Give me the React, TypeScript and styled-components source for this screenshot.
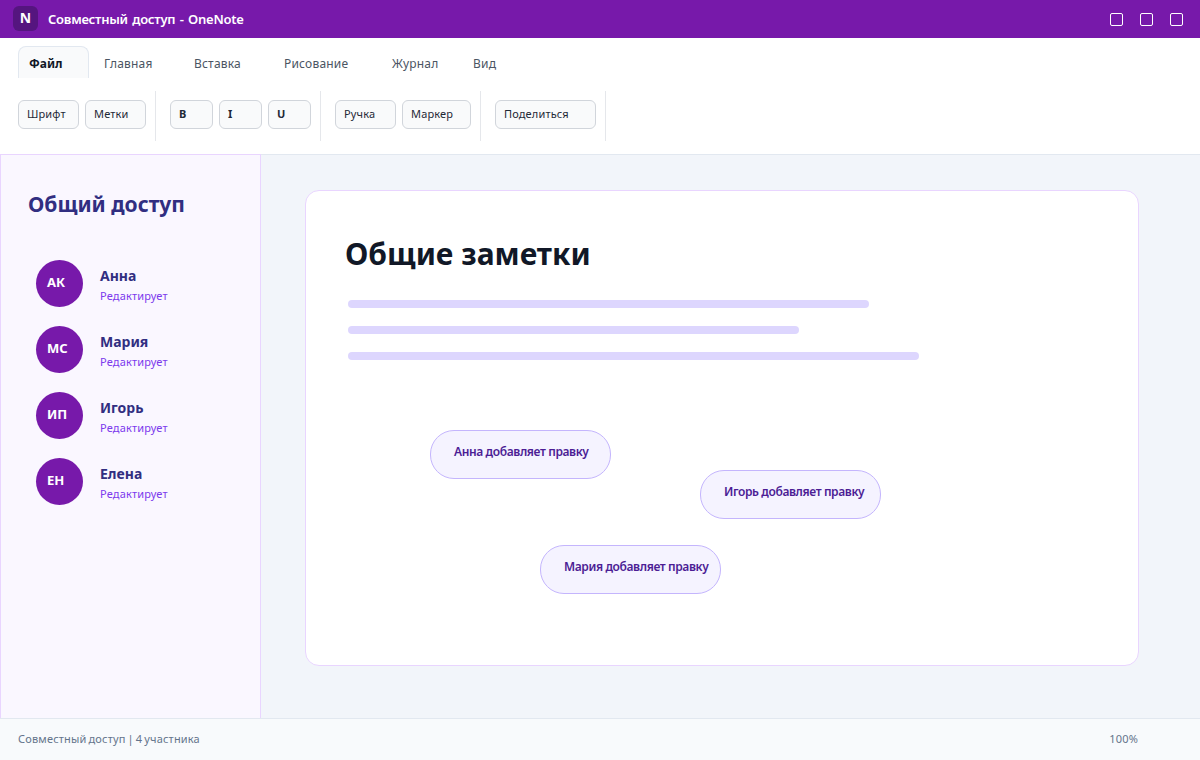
import styled, { createGlobalStyle } from "styled-components";

const GlobalStyle = createGlobalStyle`
  html, body {
    margin: 0;
    padding: 0;
    background: #f2f5fa;
  }
  * {
    box-sizing: border-box;
  }
`;

const Page = styled.div`
  width: 1200px;
  height: 760px;
  display: flex;
  flex-direction: column;
  overflow: hidden;
  font-family: "Noto Sans", sans-serif;
`;

const TitleBar = styled.header`
  height: 38px;
  flex: none;
  display: flex;
  align-items: center;
  padding: 0 17px 0 13px;
  background: #7719aa;
  color: #fff;
`;

const Logo = styled.div`
  width: 25px;
  height: 25px;
  margin-right: 10px;
  margin-top: -1px;
  border-radius: 6px;
  background: #55157f;
  display: flex;
  align-items: center;
  justify-content: center;
  font-size: 14px;
  font-weight: 700;
  padding-bottom: 2px;
`;

const AppTitle = styled.div`
  font-size: 13px;
  font-weight: 600;
  letter-spacing: -0.25px;
  word-spacing: 1.3px;
  flex: 1;
`;

const WindowButtons = styled.div`
  display: flex;
  gap: 17px;
`;

const WindowButton = styled.div`
  width: 13px;
  height: 13px;
  border: 1px solid #fff;
  border-radius: 2px;
`;

const Ribbon = styled.div`
  height: 116px;
  flex: none;
  background: #fff;
`;

const Tabs = styled.div`
  display: flex;
  gap: 4px;
  height: 40px;
  padding: 8px 18px 0;
`;

const Tab = styled.div<{ $width: number; $active?: boolean }>`
  width: ${(p) => p.$width}px;
  height: 32px;
  padding: ${(p) => (p.$active ? "1px" : "2px")} 10px 0;
  display: flex;
  align-items: center;
  font-size: 12px;
  white-space: nowrap;
  letter-spacing: ${(p) => (p.$active ? "0" : "0.2px")};
  border: 1px solid ${(p) => (p.$active ? "#e2e8f0" : "transparent")};
  border-bottom: 0;
  border-radius: 8px 8px 0 0;
  background: ${(p) => (p.$active ? "#f9fafb" : "transparent")};
  color: ${(p) => (p.$active ? "#111827" : "#4b5563")};
  font-weight: ${(p) => (p.$active ? 700 : 400)};
`;

const Toolbar = styled.div`
  display: flex;
  padding: 13px 18px 0;
`;

const Group = styled.div`
  height: 50px;
  display: flex;
  gap: 6px;
  padding: 9px 9px 0 0;
  margin-right: 14px;
  border-right: 1px solid #e5e7eb;
`;

const ToolButton = styled.div<{ $width: number; $bold?: boolean }>`
  width: ${(p) => p.$width}px;
  height: 29px;
  padding: 0 8px 2px;
  display: flex;
  align-items: center;
  font-size: 11px;
  letter-spacing: ${(p) => (p.$bold ? "0" : "0.15px")};
  font-weight: ${(p) => (p.$bold ? 700 : 400)};
  color: #1f2937;
  background: #f9fafb;
  border: 1px solid #d1d5db;
  border-radius: 6px;
`;

const Body = styled.div`
  flex: 1;
  min-height: 0;
  display: flex;
`;

const Sidebar = styled.aside`
  width: 261px;
  flex: none;
  padding: 33px 27px 0;
  background: #faf7ff;
  border: 1px solid #e9d5ff;
  border-bottom: 0;
`;

const SidebarTitle = styled.h2`
  margin: 0 0 40px;
  font-size: 21px;
  line-height: 32px;
  font-weight: 700;
  color: #312e81;
`;

const People = styled.div`
  display: flex;
  flex-direction: column;
  gap: 19px;
  padding-left: 8px;
`;

const Person = styled.div`
  display: flex;
  align-items: center;
  gap: 17px;
`;

const Avatar = styled.div`
  width: 47px;
  height: 47px;
  flex: none;
  border-radius: 50%;
  background: #7719aa;
  color: #fff;
  font-size: 13px;
  font-weight: 700;
  display: flex;
  align-items: center;
  padding: 0 0 3px 11px;
`;

const PersonText = styled.div`
  display: flex;
  flex-direction: column;
  gap: 3px;
  padding-top: 2px;
`;

const PersonName = styled.div`
  font-size: 14px;
  line-height: 19px;
  font-weight: 700;
  color: #312e81;
`;

const PersonRole = styled.div`
  font-size: 11px;
  line-height: 15px;
  letter-spacing: 0.18px;
  color: #7c3aed;
`;

const Main = styled.main`
  flex: 1;
  padding: 35px 61px 52px 44px;
  background: #f2f5fa;
  border-top: 1px solid #e2e8f0;
`;

const Card = styled.section`
  position: relative;
  height: 100%;
  padding: 41px 39px 0;
  background: #fff;
  border: 1px solid #e9d5ff;
  border-radius: 14px;
`;

const Heading = styled.h1`
  margin: 0 0 24px;
  font-size: 30px;
  line-height: 44px;
  font-weight: 700;
  color: #111827;
`;

const Lines = styled.div`
  display: flex;
  flex-direction: column;
  gap: 18px;
  padding-left: 3px;
`;

const Line = styled.div<{ $width: number }>`
  width: ${(p) => p.$width}px;
  height: 8px;
  border-radius: 4px;
  background: #ddd6fe;
`;

const Bubble = styled.div<{ $left: number; $top: number }>`
  position: absolute;
  left: ${(p) => p.$left}px;
  top: ${(p) => p.$top}px;
  width: 181px;
  height: 49px;
  padding: 12px 0 0 23px;
  font-size: 12px;
  line-height: 17px;
  font-weight: 600;
  letter-spacing: -0.38px;
  white-space: nowrap;
  color: #4c1d95;
  background: #f5f3ff;
  border: 1px solid #c4b5fd;
  border-radius: 24px;
`;

const StatusBar = styled.footer`
  height: 42px;
  flex: none;
  display: flex;
  align-items: center;
  justify-content: space-between;
  padding: 0 62px 2px 18px;
  font-size: 11px;
  letter-spacing: 0.17px;
  word-spacing: -1px;
  color: #64748b;
  background: #f8fafc;
  border-top: 1px solid #e2e8f0;
`;

const tabs = [
  { label: "Файл", width: 71, active: true },
  { label: "Главная", width: 86 },
  { label: "Вставка", width: 86 },
  { label: "Рисование", width: 104 },
  { label: "Журнал", width: 77 },
  { label: "Вид", width: 50 },
];

const groups = [
  [
    { label: "Шрифт", width: 61 },
    { label: "Метки", width: 61 },
  ],
  [
    { label: "B", width: 43, bold: true },
    { label: "I", width: 43, bold: true },
    { label: "U", width: 43, bold: true },
  ],
  [
    { label: "Ручка", width: 61 },
    { label: "Маркер", width: 69 },
  ],
  [{ label: "Поделиться", width: 101 }],
];

const people = [
  { initials: "АК", name: "Анна" },
  { initials: "МС", name: "Мария" },
  { initials: "ИП", name: "Игорь" },
  { initials: "ЕН", name: "Елена" },
];

const bubbles = [
  { text: "Анна добавляет правку", left: 124, top: 239 },
  { text: "Игорь добавляет правку", left: 394, top: 279 },
  { text: "Мария добавляет правку", left: 234, top: 354 },
];

export default function App() {
  return (
    <Page>
      <GlobalStyle />
      <TitleBar>
        <Logo>N</Logo>
        <AppTitle>Совместный доступ - OneNote</AppTitle>
        <WindowButtons>
          <WindowButton />
          <WindowButton />
          <WindowButton />
        </WindowButtons>
      </TitleBar>

      <Ribbon>
        <Tabs>
          {tabs.map((t) => (
            <Tab key={t.label} $width={t.width} $active={t.active}>
              {t.label}
            </Tab>
          ))}
        </Tabs>
        <Toolbar>
          {groups.map((g) => (
            <Group key={g[0].label}>
              {g.map((b) => (
                <ToolButton key={b.label} $width={b.width} $bold={b.bold}>
                  {b.label}
                </ToolButton>
              ))}
            </Group>
          ))}
        </Toolbar>
      </Ribbon>

      <Body>
        <Sidebar>
          <SidebarTitle>Общий доступ</SidebarTitle>
          <People>
            {people.map((p) => (
              <Person key={p.name}>
                <Avatar>{p.initials}</Avatar>
                <PersonText>
                  <PersonName>{p.name}</PersonName>
                  <PersonRole>Редактирует</PersonRole>
                </PersonText>
              </Person>
            ))}
          </People>
        </Sidebar>

        <Main>
          <Card>
            <Heading>Общие заметки</Heading>
            <Lines>
              <Line $width={521} />
              <Line $width={451} />
              <Line $width={571} />
            </Lines>
            {bubbles.map((b) => (
              <Bubble key={b.text} $left={b.left} $top={b.top}>
                {b.text}
              </Bubble>
            ))}
          </Card>
        </Main>
      </Body>

      <StatusBar>
        <span>Совместный доступ | 4 участника</span>
        <span>100%</span>
      </StatusBar>
    </Page>
  );
}
